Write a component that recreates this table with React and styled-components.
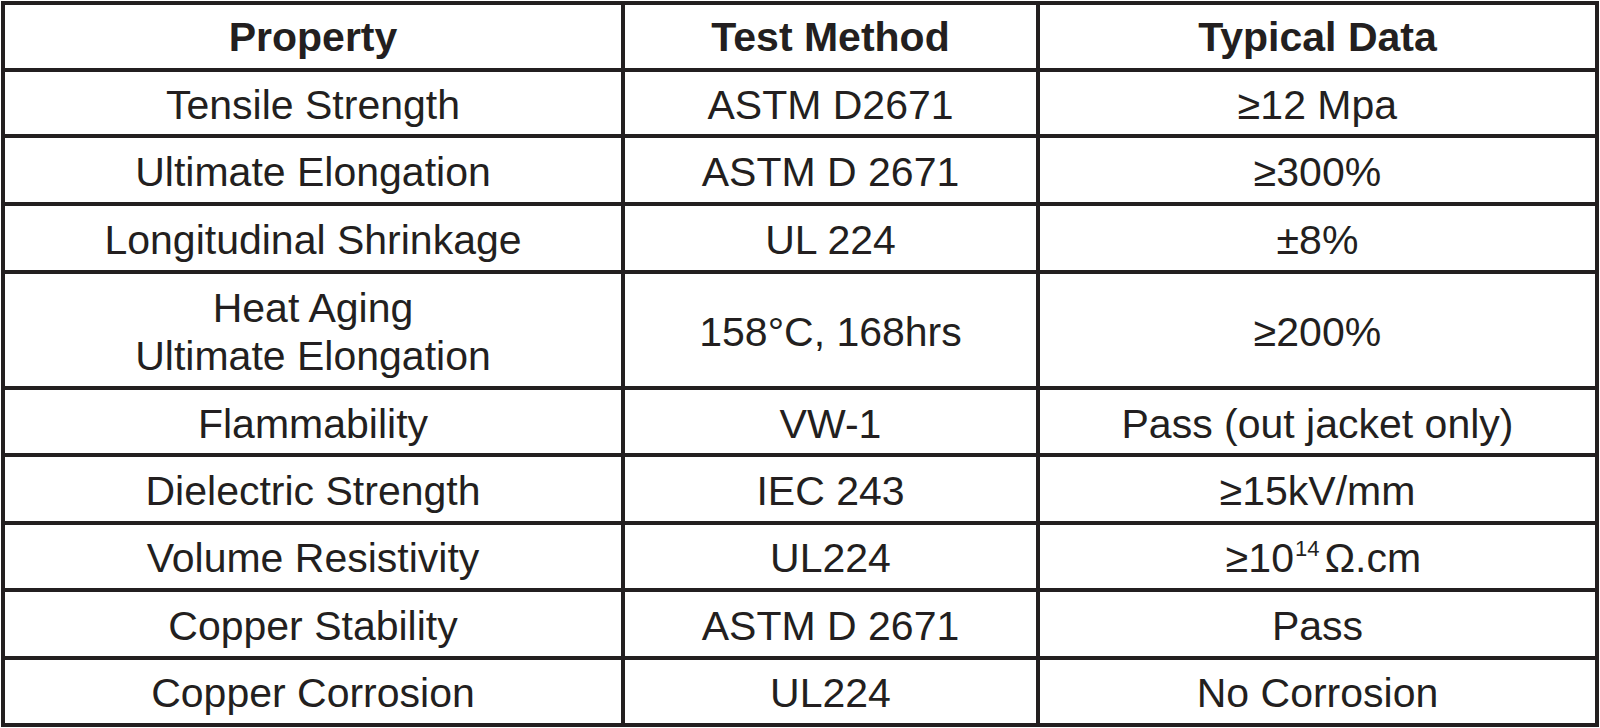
import React from 'react'
import styled, { createGlobalStyle } from 'styled-components'

const GlobalStyle = createGlobalStyle`
    html, body {
        margin: 0;
        padding: 0;
        background: #fff;
    }
    * {
        box-sizing: border-box;
    }
`

const Page = styled.div`
    padding: 1px 0 0 1px;
    width: 1600px;
    height: 728px;
    background: #fff;
`

const Table = styled.div`
    display: grid;
    grid-template-columns: 616px 411px 555px;
    grid-template-rows: 63px 62px 64px 64px 112px repeat(5, 1fr);
    gap: 4px;
    padding: 4px;
    width: 1598px;
    height: 726px;
    background: #231f20;
    font-family: "Liberation Sans", Arial, sans-serif;
    color: #231f20;
`

const Cell = styled.div`
    background: #fff;
    display: flex;
    flex-direction: column;
    align-items: center;
    justify-content: center;
    text-align: center;
    font-size: 41px;
    line-height: 48px;
    font-weight: ${props => props.$head ? 700 : 400};
    padding-top: ${props => props.$head ? '1px' : '4px'};
`

const Value = styled.span`
    padding-left: 12px;
`

const Sup = styled.sup`
    font-size: 22px;
    line-height: 0;
    vertical-align: 16px;
    margin: 0 5px 0 1px;
`

const rows = [
    ['Tensile Strength', 'ASTM D2671', '≥12 Mpa'],
    ['Ultimate Elongation', 'ASTM D 2671', '≥300%'],
    ['Longitudinal Shrinkage', 'UL 224', '±8%'],
    [<>Heat Aging<br />Ultimate Elongation</>, '158°C, 168hrs', '≥200%'],
    ['Flammability', 'VW-1', 'Pass (out jacket only)'],
    ['Dielectric Strength', 'IEC 243', '≥15kV/mm'],
    ['Volume Resistivity', 'UL224', <Value>≥10<Sup>14</Sup>Ω.cm</Value>],
    ['Copper Stability', 'ASTM D 2671', 'Pass'],
    ['Copper Corrosion', 'UL224', 'No Corrosion'],
]

const App = () => {
    return (
        <Page>
            <GlobalStyle />
            <Table>
                <Cell $head>Property</Cell>
                <Cell $head>Test Method</Cell>
                <Cell $head>Typical Data</Cell>
                {rows.map((row, i) => row.map((value, j) => (
                    <Cell key={i + '-' + j}>{value}</Cell>
                )))}
            </Table>
        </Page>
    )
}

export default App
